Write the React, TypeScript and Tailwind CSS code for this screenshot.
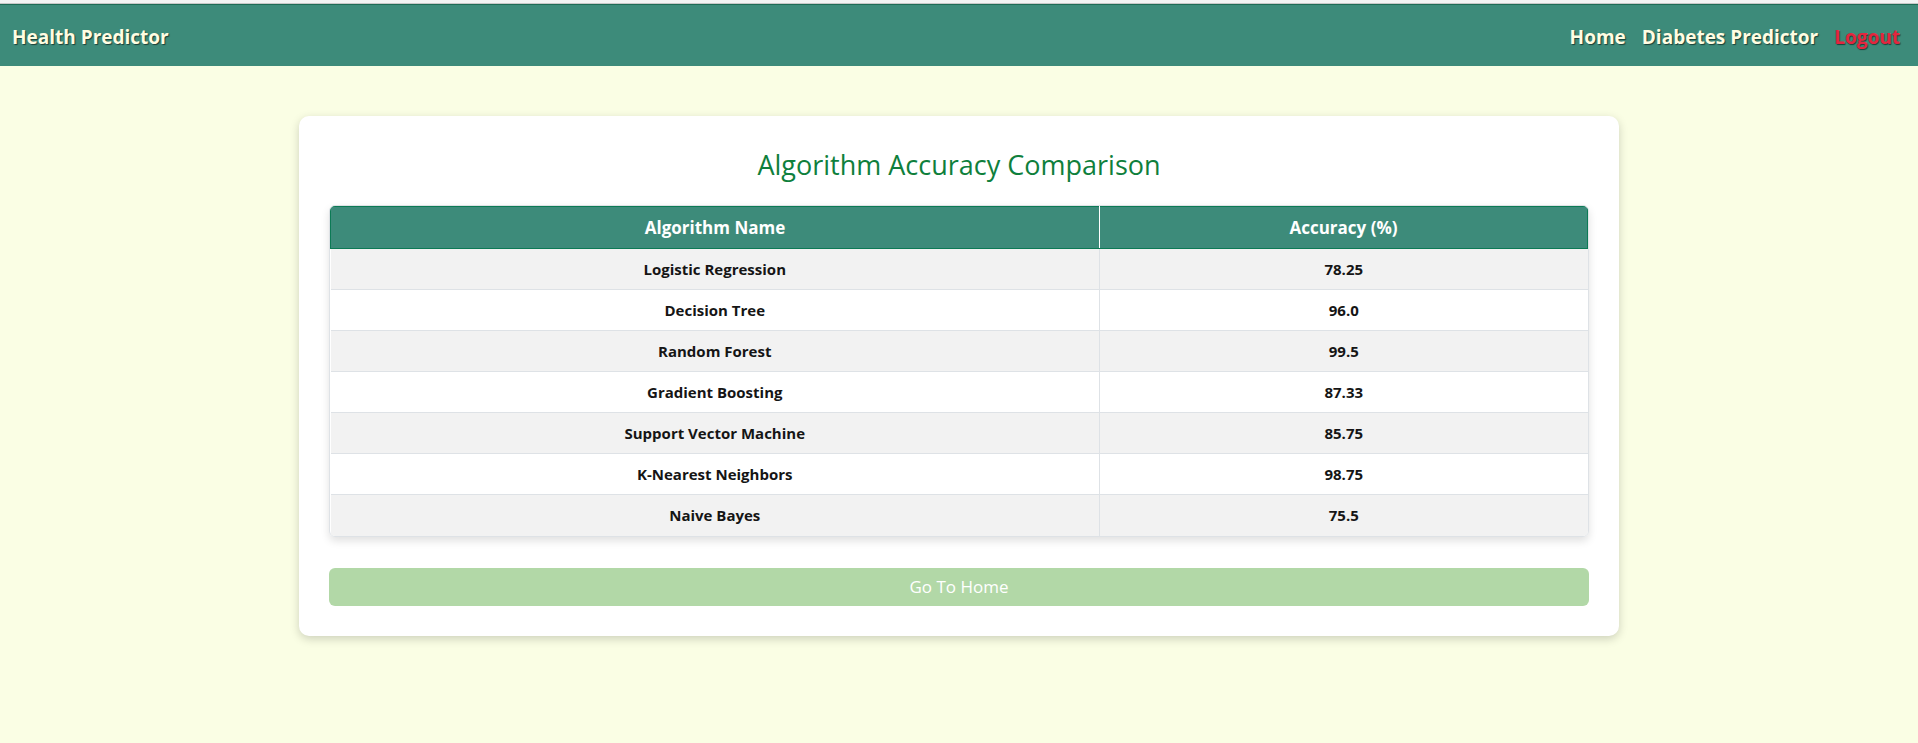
import React from "react";

interface Algo {
  name: string;
  accuracy: string;
}

const algorithms: Algo[] = [
  { name: "Logistic Regression", accuracy: "78.25" },
  { name: "Decision Tree", accuracy: "96.0" },
  { name: "Random Forest", accuracy: "99.5" },
  { name: "Gradient Boosting", accuracy: "87.33" },
  { name: "Support Vector Machine", accuracy: "85.75" },
  { name: "K-Nearest Neighbors", accuracy: "98.75" },
  { name: "Naive Bayes", accuracy: "75.5" },
];

export default function App() {
  return (
    <div className="min-h-screen bg-[#fafee4] font-['Open_Sans',sans-serif]">
      {/* top strip */}
      <div className="h-[4px] bg-[#f3f3f3] border-b border-[#c8c8c8]" />

      {/* Navbar */}
      <nav className="h-[62px] bg-[#3d8b7a] border-t border-[#1f6b55] flex items-center justify-between pl-[12px] pr-[18px] pt-[3px]">
        <span className="text-[19px] font-bold text-[#fffde2] [text-shadow:1px_1px_1px_rgba(0,0,0,0.55)]">
          Health Predictor
        </span>
        <div className="flex items-center gap-[16px] text-[19px] font-bold [text-shadow:1px_1px_1px_rgba(0,0,0,0.55)]">
          <a className="text-[#fffde2]">Home</a>
          <a className="text-[#fffde2]">Diabetes Predictor</a>
          <a className="text-[#e3263f]">Logout</a>
        </div>
      </nav>

      {/* Card */}
      <div className="w-[1320px] mx-auto mt-[50px] bg-white rounded-[10px] shadow-[0_3px_10px_rgba(0,0,0,0.18)] p-[30px]">
        <h2 className="text-center text-[27px] leading-[34px] text-[#0f7f3c] mt-[2px] mb-[23px]">
          Algorithm Accuracy Comparison
        </h2>

        <div className="rounded-[6px] overflow-hidden shadow-[0_4px_8px_rgba(0,0,0,0.12)] border border-[#dee2e6]">
          <table className="w-full border-collapse text-center">
            <thead>
              <tr className="bg-[#3d8b7a] text-white text-[17px] font-bold h-[42px]">
                <th className="w-[769px] border border-[#0c7a55] border-r-white">Algorithm Name</th>
                <th className="border border-[#0c7a55] border-l-white">Accuracy (%)</th>
              </tr>
            </thead>
            <tbody>
              {algorithms.map((a, i) => (
                <tr
                  key={a.name}
                  className={`h-[41px] text-[15px] font-bold text-[#151515] ${i % 2 === 0 ? "bg-[#f2f2f2]" : "bg-white"}`}
                >
                  <td className="border-t border-r border-[#dee2e6]">{a.name}</td>
                  <td className="border-t border-[#dee2e6]">{a.accuracy}</td>
                </tr>
              ))}
            </tbody>
          </table>
        </div>

        <button className="w-full mt-[31px] h-[38px] rounded-[6px] bg-[#b2d8a7] text-white text-[17px]">
          Go To Home
        </button>
      </div>
    </div>
  );
}
